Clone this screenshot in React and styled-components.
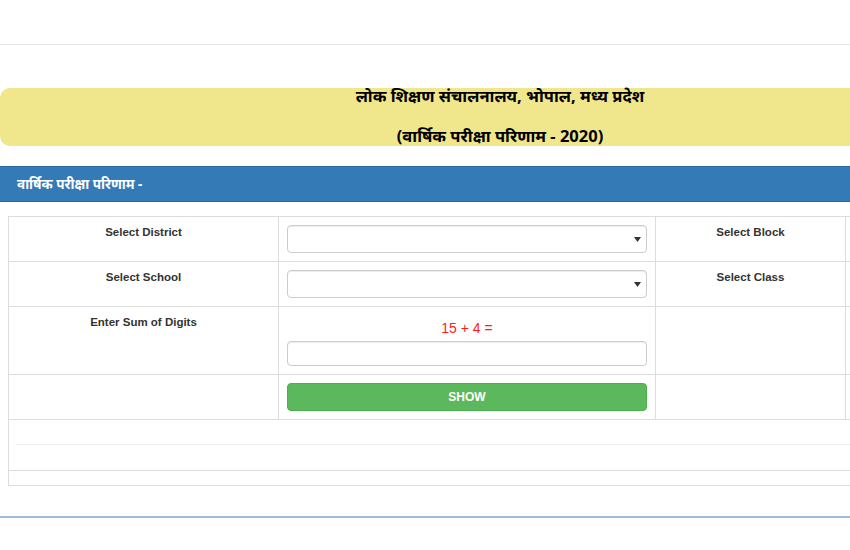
import React from 'react'
import styled, { createGlobalStyle } from 'styled-components'

const GlobalStyle = createGlobalStyle`
  html, body {
    margin: 0;
    padding: 0;
    background: #fff;
    overflow: hidden;
  }
  body {
    font-family: "Liberation Sans", Arial, "Noto Sans", sans-serif;
    color: #333;
  }
`;

const Page = styled.div`
  width: 1000px;
  display: flex;
  flex-direction: column;
`;

const TopNav = styled.div`
  height: 44px;
  border-bottom: 1px solid #e7e7e7;
`;

const Banner = styled.div`
  margin-top: 43px;
  height: 58px;
  background: #f0e68c;
  border-radius: 10px;
  display: flex;
  flex-direction: column;
  align-items: center;
  gap: 22px;
  font-family: "Noto Sans", "Liberation Sans", sans-serif;
  font-weight: bold;
  font-size: 16.5px;
  color: #000;
`;

const BannerLine = styled.div`
  line-height: 18px;
  margin-top: ${({ first }) => (first ? '-1px' : '0')};
`;

const PanelHeading = styled.div`
  margin-top: 20px;
  height: 36px;
  background: #337ab7;
  border-top: 1px solid #2e6da4;
  border-bottom: 1px solid #2e6da4;
  box-sizing: border-box;
  display: flex;
  align-items: center;
  padding-left: 17px;
  color: #fff;
  font-family: "Noto Sans", "Liberation Sans", sans-serif;
  font-weight: bold;
  font-size: 13.5px;
`;

const Table = styled.table`
  margin: 14px 8px 0;
  width: 984px;
  border-collapse: collapse;
  font-size: 12px;
  table-layout: fixed;

  td {
    border: 1px solid #ddd;
    padding: 8px;
    vertical-align: top;
    box-sizing: border-box;
  }
`;

const Label = styled.td`
  text-align: center;
  font-weight: bold;
  font-size: 11.5px;
  line-height: 15px;
  color: #333;
`;

const Field = styled.td`
  text-align: center;
`;

const SelectWrap = styled.div`
  position: relative;
`;

const Select = styled.select`
  appearance: none;
  width: 100%;
  height: 28px;
  border: 1px solid #ccc;
  border-radius: 4px;
  background: #fff;
  box-shadow: inset 0 1px 1px rgba(0, 0, 0, 0.075);
  display: block;
`;

const Arrow = styled.svg`
  position: absolute;
  right: 6px;
  top: 12px;
  pointer-events: none;
`;

const Captcha = styled.div`
  color: #ff1a1a;
  font-size: 14px;
  line-height: 20px;
  padding-top: 3px;
`;

const Input = styled.input`
  display: block;
  width: 100%;
  box-sizing: border-box;
  height: 25px;
  margin-top: 3px;
  border: 1px solid #ccc;
  border-radius: 4px;
  box-shadow: inset 0 1px 1px rgba(0, 0, 0, 0.075);
`;

const ShowButton = styled.button`
  display: block;
  width: 100%;
  height: 28px;
  border: 1px solid #4cae4c;
  border-radius: 4px;
  background: #5cb85c;
  color: #fff;
  font-family: "Liberation Sans", Arial, sans-serif;
  font-weight: bold;
  font-size: 12px;
`;

const SpacerCell = styled.td`
  height: ${({ h }) => h}px;
  padding: 0 !important;
`;

const InnerRule = styled.div`
  margin: 24px 0 0 7px;
  border-top: 1px solid #eee;
`;

const Footer = styled.div`
  margin-top: 30px;
  border-top: 2px solid #9dbcdd;
`;

function DropDown() {
  return (
    <SelectWrap>
      <Select defaultValue="">
        <option value=""></option>
      </Select>
      <Arrow width="7" height="5" viewBox="0 0 7 5">
        <path d="M0 0 L7 0 L3.5 5 Z" fill="#333" />
      </Arrow>
    </SelectWrap>
  )
}

export default function App() {
  return (
    <Page>
      <GlobalStyle />
      <TopNav />
      <Banner>
        <BannerLine first>लोक शिक्षण संचालनालय, भोपाल, मध्य प्रदेश</BannerLine>
        <BannerLine>(वार्षिक परीक्षा परिणाम - 2020)</BannerLine>
      </Banner>
      <PanelHeading>वार्षिक परीक्षा परिणाम -</PanelHeading>
      <Table>
        <colgroup>
          <col style={{ width: 270 }} />
          <col style={{ width: 377 }} />
          <col style={{ width: 190 }} />
          <col />
        </colgroup>
        <tbody>
          <tr>
            <Label>Select District</Label>
            <Field><DropDown /></Field>
            <Label>Select Block</Label>
            <Field><DropDown /></Field>
          </tr>
          <tr>
            <Label>Select School</Label>
            <Field><DropDown /></Field>
            <Label>Select Class</Label>
            <Field><DropDown /></Field>
          </tr>
          <tr>
            <Label>Enter Sum of Digits</Label>
            <Field>
              <Captcha>15 + 4 =</Captcha>
              <Input type="text" />
            </Field>
            <Label></Label>
            <Label></Label>
          </tr>
          <tr>
            <Label></Label>
            <Field><ShowButton>SHOW</ShowButton></Field>
            <Label></Label>
            <Label></Label>
          </tr>
          <tr>
            <SpacerCell colSpan={4} h={51}><InnerRule /></SpacerCell>
          </tr>
          <tr>
            <SpacerCell colSpan={4} h={15}></SpacerCell>
          </tr>
        </tbody>
      </Table>
      <Footer />
    </Page>
  )
}
